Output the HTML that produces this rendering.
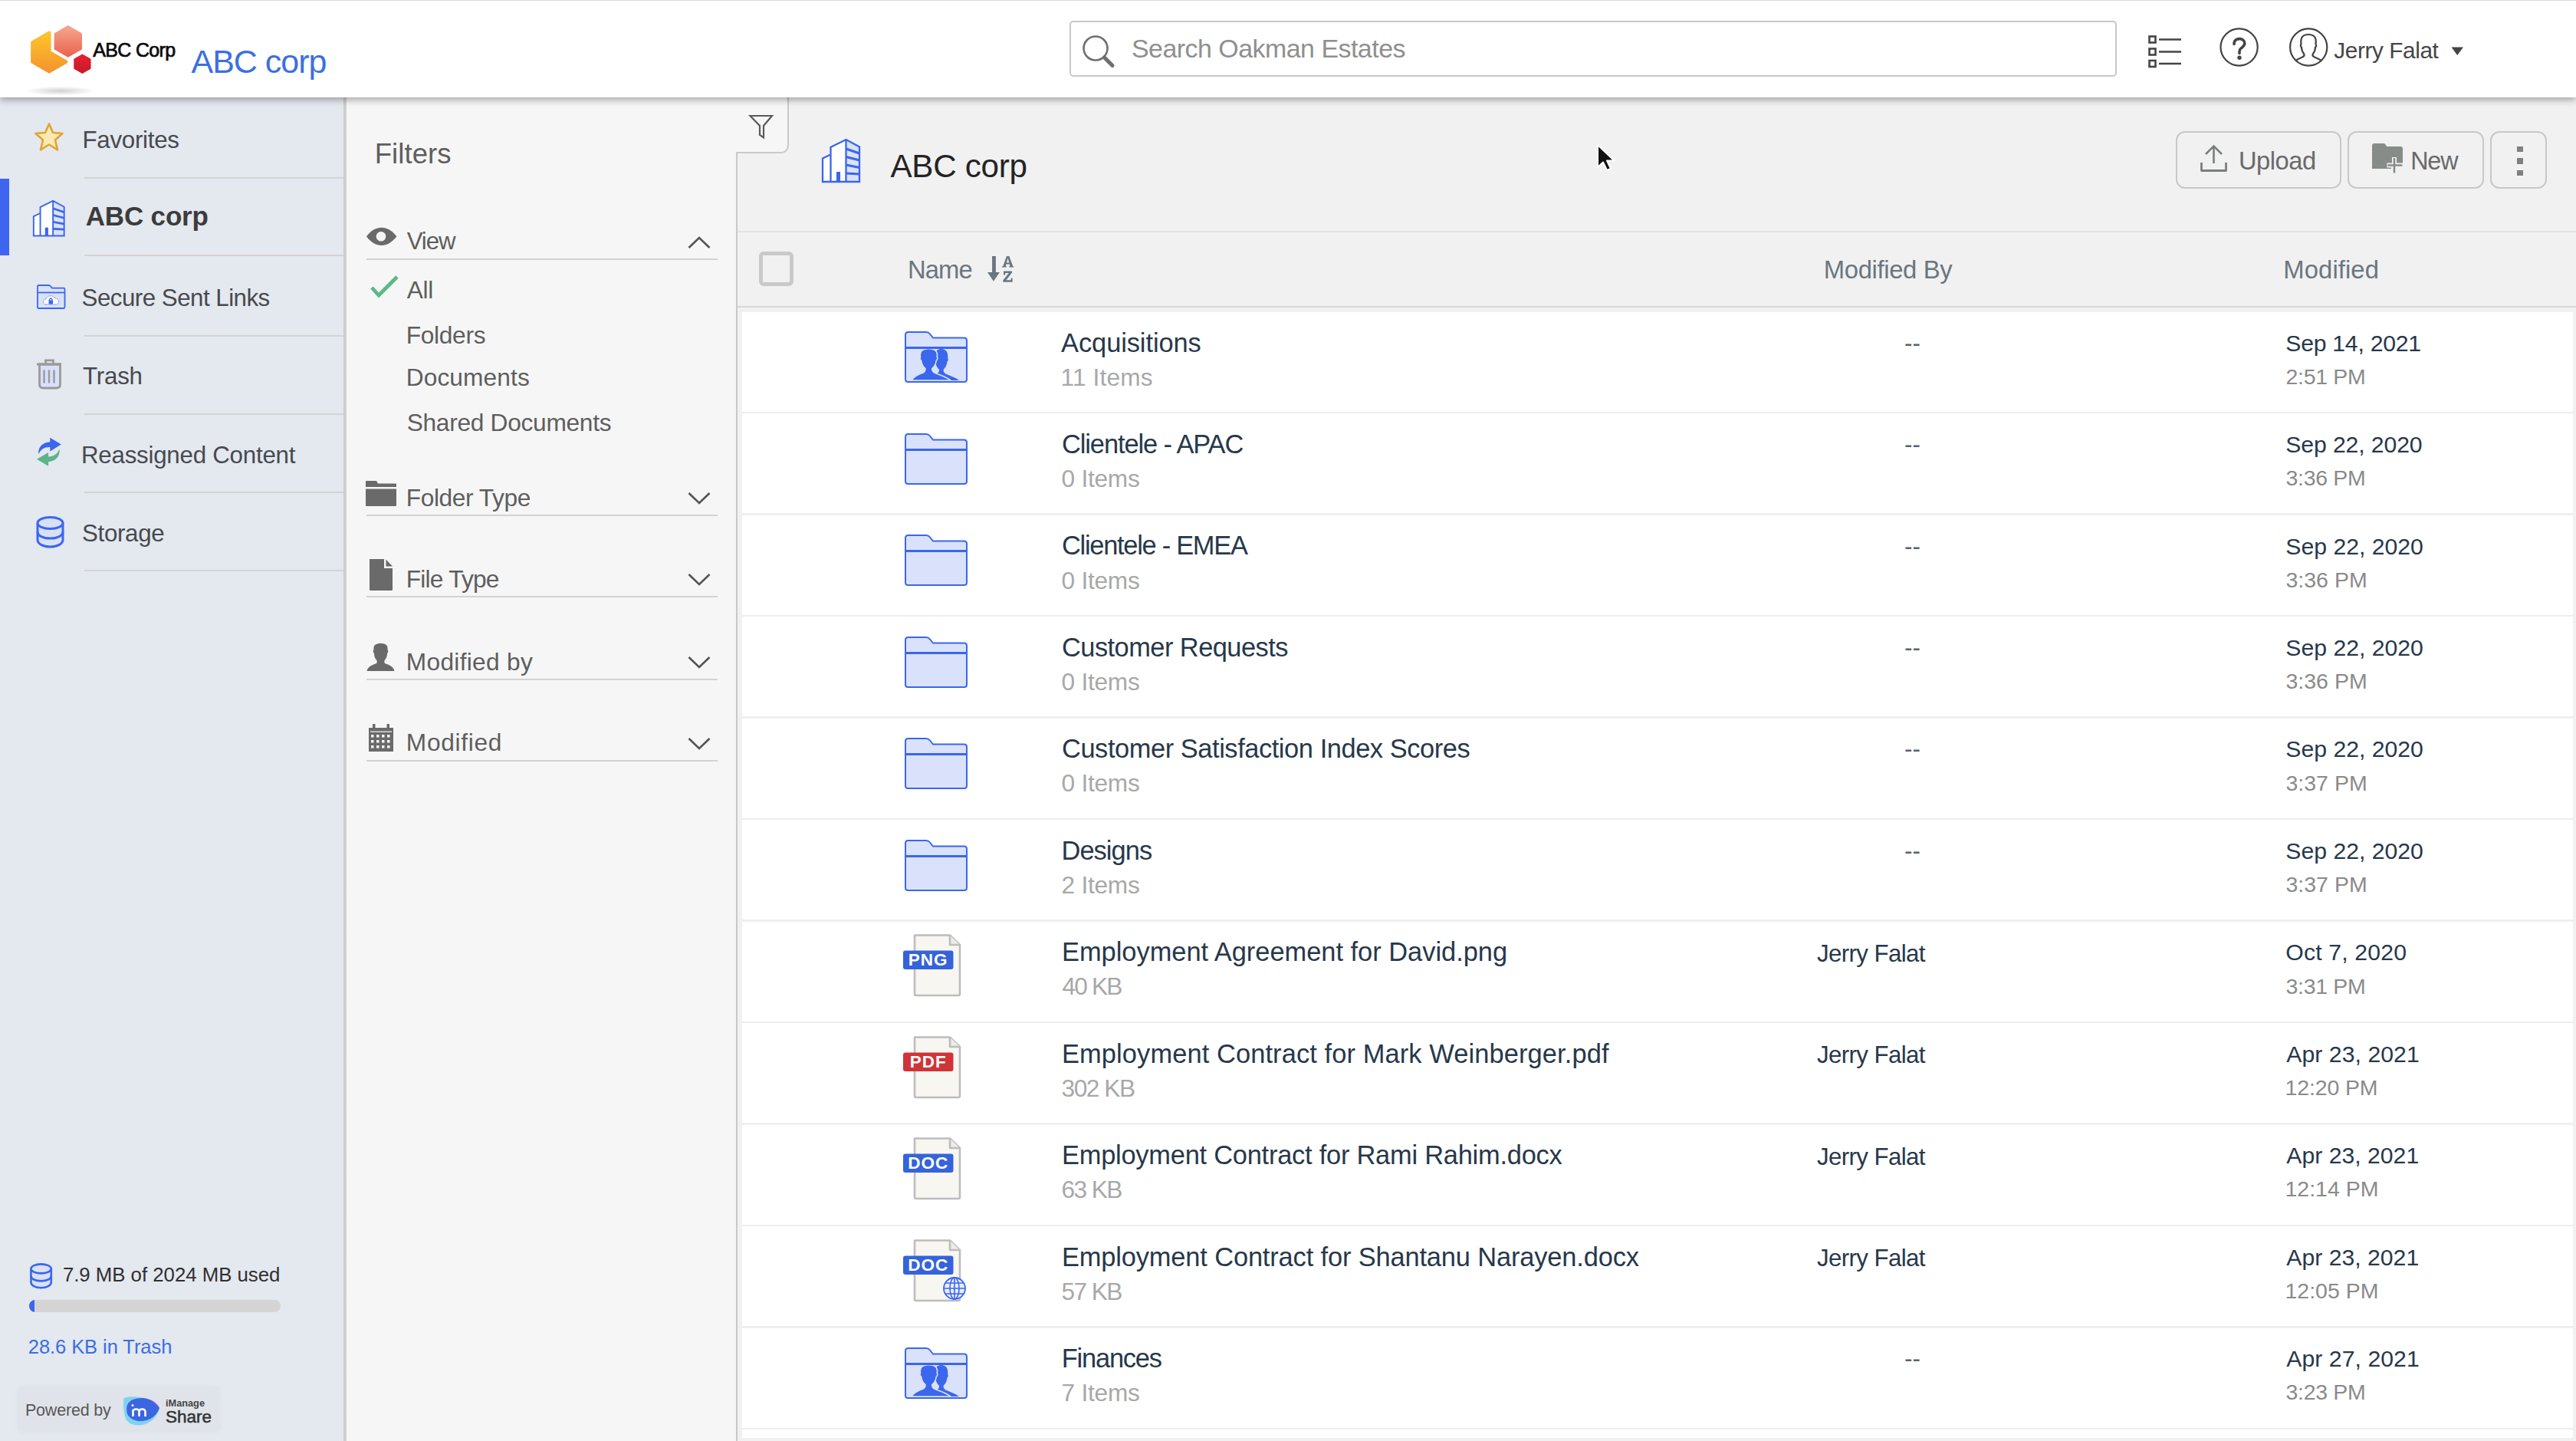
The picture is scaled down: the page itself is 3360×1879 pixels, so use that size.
<!DOCTYPE html>
<html><head><meta charset="utf-8"><style>
html,body{margin:0;padding:0;width:3360px;height:1879px;overflow:hidden;background:#f1f1f1;font-family:'Liberation Sans', sans-serif;}
.a{position:absolute;}
.t{position:absolute;white-space:nowrap;line-height:1;font-family:'Liberation Sans', sans-serif;}
svg{position:absolute;overflow:visible;}
</style></head><body>

<div class="a" style="left:0;top:127px;width:448px;height:1752px;background:#e4e8ef;"></div>
<div class="a" style="left:448px;top:127px;width:4px;height:1752px;background:linear-gradient(to right,#c9c9c9,#d4d4d4);"></div>
<div class="a" style="left:452px;top:127px;width:510px;height:1752px;background:#f6f6f6;"></div>
<div class="a" style="left:960px;top:198px;width:2px;height:1681px;background:#c9c9c9;"></div>
<div class="a" style="left:962px;top:100px;width:65px;height:98px;background:#f6f6f6;border-right:2px solid #c9c9c9;border-bottom:2px solid #c9c9c9;border-bottom-right-radius:10px;"></div>
<div class="a" style="left:962px;top:200px;width:0;height:0;"></div>
<!-- sidebar active marker -->
<div class="a" style="left:0;top:233px;width:12px;height:100px;background:#3d65ef;"></div>
<div class="a" style="left:110px;top:231px;width:338px;height:2px;background:#d5d3d2;"></div><div class="a" style="left:110px;top:332px;width:338px;height:2px;background:#d5d3d2;"></div><div class="a" style="left:110px;top:437px;width:338px;height:2px;background:#d5d3d2;"></div><div class="a" style="left:110px;top:539px;width:338px;height:2px;background:#d5d3d2;"></div><div class="a" style="left:110px;top:641px;width:338px;height:2px;background:#d5d3d2;"></div><div class="a" style="left:110px;top:743px;width:338px;height:2px;background:#d5d3d2;"></div>
<!-- filter lines -->
<div class="a" style="left:478px;top:337px;width:458px;height:2px;background:#d3d3d3;"></div><div class="a" style="left:478px;top:671px;width:458px;height:2px;background:#d3d3d3;"></div><div class="a" style="left:478px;top:777px;width:458px;height:2px;background:#d3d3d3;"></div><div class="a" style="left:478px;top:885px;width:458px;height:2px;background:#d3d3d3;"></div><div class="a" style="left:478px;top:991px;width:458px;height:2px;background:#d3d3d3;"></div>
<!-- table header lines -->
<div class="a" style="left:962px;top:301px;width:2398px;height:2px;background:#e2e2e2;"></div>
<div class="a" style="left:962px;top:399px;width:2398px;height:2px;background:#d8d8d8;"></div>
<div class="a" style="left:990px;top:328px;width:35px;height:35px;border:5px solid #c9c9c9;border-radius:6px;"></div>
<!-- buttons -->
<div class="a" style="left:2838px;top:171px;width:212px;height:71px;border:2px solid #c8c8c8;border-radius:12px;"></div>
<div class="a" style="left:3062px;top:171px;width:174px;height:71px;border:2px solid #c8c8c8;border-radius:12px;"></div>
<div class="a" style="left:3248px;top:171px;width:70px;height:71px;border:2px solid #c8c8c8;border-radius:12px;"></div>
<div class="a" style="left:3283px;top:191px;width:8px;height:7px;background:#808080;"></div>
<div class="a" style="left:3283px;top:206px;width:8px;height:8px;background:#808080;"></div>
<div class="a" style="left:3283px;top:222px;width:8px;height:7px;background:#808080;"></div>
<div class="a" style="left:968px;top:407.00px;width:2388px;height:130px;background:#fff;"></div><div class="a" style="left:968px;top:537.00px;width:2388px;height:2px;background:#eeeeee;"></div><div class="a" style="left:968px;top:539.45px;width:2388px;height:130px;background:#fff;"></div><div class="a" style="left:968px;top:669.45px;width:2388px;height:2px;background:#eeeeee;"></div><div class="a" style="left:968px;top:671.90px;width:2388px;height:130px;background:#fff;"></div><div class="a" style="left:968px;top:801.90px;width:2388px;height:2px;background:#eeeeee;"></div><div class="a" style="left:968px;top:804.35px;width:2388px;height:130px;background:#fff;"></div><div class="a" style="left:968px;top:934.35px;width:2388px;height:2px;background:#eeeeee;"></div><div class="a" style="left:968px;top:936.80px;width:2388px;height:130px;background:#fff;"></div><div class="a" style="left:968px;top:1066.80px;width:2388px;height:2px;background:#eeeeee;"></div><div class="a" style="left:968px;top:1069.25px;width:2388px;height:130px;background:#fff;"></div><div class="a" style="left:968px;top:1199.25px;width:2388px;height:2px;background:#eeeeee;"></div><div class="a" style="left:968px;top:1201.70px;width:2388px;height:130px;background:#fff;"></div><div class="a" style="left:968px;top:1331.70px;width:2388px;height:2px;background:#eeeeee;"></div><div class="a" style="left:968px;top:1334.15px;width:2388px;height:130px;background:#fff;"></div><div class="a" style="left:968px;top:1464.15px;width:2388px;height:2px;background:#eeeeee;"></div><div class="a" style="left:968px;top:1466.60px;width:2388px;height:130px;background:#fff;"></div><div class="a" style="left:968px;top:1596.60px;width:2388px;height:2px;background:#eeeeee;"></div><div class="a" style="left:968px;top:1599.05px;width:2388px;height:130px;background:#fff;"></div><div class="a" style="left:968px;top:1729.05px;width:2388px;height:2px;background:#eeeeee;"></div><div class="a" style="left:968px;top:1731.50px;width:2388px;height:130px;background:#fff;"></div><div class="a" style="left:968px;top:1861.50px;width:2388px;height:2px;background:#eeeeee;"></div><div class="a" style="left:968px;top:1863.95px;width:2388px;height:11.05px;background:#fff;"></div>
<div class="a" style="left:38px;top:1695px;width:328px;height:16px;border-radius:8px;background:#d4d4d4;overflow:hidden;"><div style="width:7px;height:16px;background:#3d65ef;"></div></div>
<div class="a" style="left:24px;top:1808px;width:262px;height:57px;background:#e0e3e9;border-radius:2px;box-shadow:0 2px 8px rgba(0,0,0,0.04);"></div>

<div class="a" style="left:0;top:0;width:3360px;height:127px;background:#fff;box-shadow:0 3px 9px rgba(0,0,0,0.35);z-index:5;"></div>
<div class="a" style="left:0;top:0;width:3360px;height:1px;background:#d5d5d5;z-index:6;"></div>
<div class="a" style="left:1395px;top:27px;width:1362px;height:69px;border:2px solid #c8c8c8;border-radius:5px;z-index:6;"></div>

<div id="hdr_abc" class="t" style="left:249.50px;top:59.20px;font-size:43.0px;color:#3b6fe3;z-index:8;letter-spacing:-0.999px;">ABC corp</div>
<div id="logo_t" class="t" style="left:121.20px;top:52.60px;font-size:25.0px;color:#0a0a0a;z-index:8;-webkit-text-stroke:0.7px #0a0a0a;letter-spacing:-0.648px;">ABC Corp</div>
<div id="search_t" class="t" style="left:1476.00px;top:47.10px;font-size:33.9px;color:#8f8f8f;z-index:8;letter-spacing:-0.494px;">Search Oakman Estates</div>
<div id="jerry_h" class="t" style="left:3044.30px;top:50.80px;font-size:29.8px;color:#454545;z-index:8;letter-spacing:-0.416px;">Jerry Falat</div>
<div id="fav" class="t" style="left:107.40px;top:166.80px;font-size:31.3px;color:#474a4e;letter-spacing:-0.269px;">Favorites</div>
<div id="abc_b" class="t" style="left:111.70px;top:263.90px;font-size:35.0px;color:#3c3c3c;font-weight:700;letter-spacing:-0.160px;">ABC corp</div>
<div id="secure" class="t" style="left:106.60px;top:372.60px;font-size:31.3px;color:#474a4e;letter-spacing:-0.522px;">Secure Sent Links</div>
<div id="trash" class="t" style="left:108.00px;top:474.90px;font-size:31.3px;color:#474a4e;letter-spacing:-0.208px;">Trash</div>
<div id="reass" class="t" style="left:106.00px;top:577.70px;font-size:31.3px;color:#474a4e;letter-spacing:-0.247px;">Reassigned Content</div>
<div id="storage" class="t" style="left:107.00px;top:679.70px;font-size:31.3px;color:#474a4e;letter-spacing:-0.335px;">Storage</div>
<div id="used" class="t" style="left:81.90px;top:1650.20px;font-size:25.8px;color:#303030;letter-spacing:-0.023px;">7.9 MB of 2024 MB used</div>
<div id="intrash" class="t" style="left:36.80px;top:1744.00px;font-size:25.5px;color:#3a6ee6;letter-spacing:-0.067px;">28.6 KB in Trash</div>
<div id="powered" class="t" style="left:32.90px;top:1829.30px;font-size:21.5px;color:#585858;letter-spacing:-0.187px;">Powered by</div>
<div id="filters" class="t" style="left:488.70px;top:183.30px;font-size:36.5px;color:#5e5e5e;letter-spacing:0.082px;">Filters</div>
<div id="f_view" class="t" style="left:530.70px;top:299.00px;font-size:31.2px;color:#5e5e5e;letter-spacing:-1.071px;">View</div>
<div id="f_all" class="t" style="left:530.70px;top:363.30px;font-size:31.7px;color:#5e5e5e;letter-spacing:-0.288px;">All</div>
<div id="f_folders" class="t" style="left:529.70px;top:421.70px;font-size:31.7px;color:#5e5e5e;letter-spacing:-0.303px;">Folders</div>
<div id="f_docs" class="t" style="left:529.70px;top:477.30px;font-size:31.7px;color:#5e5e5e;letter-spacing:0.110px;">Documents</div>
<div id="f_shared" class="t" style="left:530.70px;top:535.70px;font-size:31.7px;color:#5e5e5e;letter-spacing:-0.294px;">Shared Documents</div>
<div id="f_ftype" class="t" style="left:529.80px;top:633.70px;font-size:31.7px;color:#5e5e5e;letter-spacing:-0.429px;">Folder Type</div>
<div id="f_filetype" class="t" style="left:529.80px;top:739.60px;font-size:31.7px;color:#5e5e5e;letter-spacing:-0.792px;">File Type</div>
<div id="f_modby" class="t" style="left:529.80px;top:847.50px;font-size:31.7px;color:#5e5e5e;letter-spacing:0.300px;">Modified by</div>
<div id="f_mod" class="t" style="left:529.80px;top:953.00px;font-size:31.7px;color:#5e5e5e;letter-spacing:0.693px;">Modified</div>
<div id="title" class="t" style="left:1161.50px;top:195.60px;font-size:42.2px;color:#242424;letter-spacing:-0.296px;">ABC corp</div>
<div id="upload" class="t" style="left:2920.00px;top:194.00px;font-size:32.7px;color:#6a6a6a;letter-spacing:-0.481px;">Upload</div>
<div id="new" class="t" style="left:3144.20px;top:194.00px;font-size:32.3px;color:#6a6a6a;letter-spacing:-1.143px;">New</div>
<div id="h_name" class="t" style="left:1184.00px;top:336.40px;font-size:32.8px;color:#6b7680;letter-spacing:-0.915px;">Name</div>
<div id="h_modby" class="t" style="left:2378.80px;top:336.40px;font-size:32.8px;color:#6b7680;letter-spacing:-0.345px;">Modified By</div>
<div id="h_mod" class="t" style="left:2978.30px;top:336.40px;font-size:32.8px;color:#6b7680;letter-spacing:0.096px;">Modified</div>
<div id="r0_name" class="t" style="left:1384.10px;top:429.50px;font-size:34.4px;color:#27384a;letter-spacing:-0.074px;">Acquisitions</div>
<div id="r0_sub" class="t" style="left:1383.50px;top:476.60px;font-size:31.6px;color:#a8a8a8;letter-spacing:0.183px;">11 Items</div>
<div id="r0_by" class="t" style="left:2484.00px;top:431.60px;font-size:31.2px;color:#56616b;">--</div>
<div id="r0_date" class="t" style="left:2981.30px;top:432.60px;font-size:30.2px;color:#27384a;letter-spacing:-0.265px;">Sep 14, 2021</div>
<div id="r0_time" class="t" style="left:2981.50px;top:476.80px;font-size:28.5px;color:#8a8a8a;letter-spacing:-0.316px;">2:51 PM</div>
<div id="r1_name" class="t" style="left:1385.00px;top:561.95px;font-size:34.4px;color:#27384a;letter-spacing:-1.089px;">Clientele - APAC</div>
<div id="r1_sub" class="t" style="left:1384.50px;top:609.05px;font-size:31.6px;color:#a8a8a8;letter-spacing:-0.232px;">0 Items</div>
<div id="r1_by" class="t" style="left:2484.00px;top:564.05px;font-size:31.2px;color:#56616b;">--</div>
<div id="r1_date" class="t" style="left:2981.30px;top:565.05px;font-size:30.2px;color:#27384a;letter-spacing:-0.120px;">Sep 22, 2020</div>
<div id="r1_time" class="t" style="left:2981.50px;top:609.25px;font-size:28.5px;color:#8a8a8a;letter-spacing:-0.316px;">3:36 PM</div>
<div id="r2_name" class="t" style="left:1385.00px;top:694.40px;font-size:34.4px;color:#27384a;letter-spacing:-1.267px;">Clientele - EMEA</div>
<div id="r2_sub" class="t" style="left:1384.50px;top:741.50px;font-size:31.6px;color:#a8a8a8;letter-spacing:-0.232px;">0 Items</div>
<div id="r2_by" class="t" style="left:2484.00px;top:696.50px;font-size:31.2px;color:#56616b;">--</div>
<div id="r2_date" class="t" style="left:2981.30px;top:697.50px;font-size:30.2px;color:#27384a;">Sep 22, 2020</div>
<div id="r2_time" class="t" style="left:2981.50px;top:741.70px;font-size:28.5px;color:#8a8a8a;">3:36 PM</div>
<div id="r3_name" class="t" style="left:1385.00px;top:826.85px;font-size:34.4px;color:#27384a;letter-spacing:-0.532px;">Customer Requests</div>
<div id="r3_sub" class="t" style="left:1384.50px;top:873.95px;font-size:31.6px;color:#a8a8a8;letter-spacing:-0.232px;">0 Items</div>
<div id="r3_by" class="t" style="left:2484.00px;top:828.95px;font-size:31.2px;color:#56616b;">--</div>
<div id="r3_date" class="t" style="left:2981.30px;top:829.95px;font-size:30.2px;color:#27384a;">Sep 22, 2020</div>
<div id="r3_time" class="t" style="left:2981.50px;top:874.15px;font-size:28.5px;color:#8a8a8a;">3:36 PM</div>
<div id="r4_name" class="t" style="left:1385.00px;top:959.30px;font-size:34.4px;color:#27384a;letter-spacing:-0.424px;">Customer Satisfaction Index Scores</div>
<div id="r4_sub" class="t" style="left:1384.50px;top:1006.40px;font-size:31.6px;color:#a8a8a8;letter-spacing:-0.232px;">0 Items</div>
<div id="r4_by" class="t" style="left:2484.00px;top:961.40px;font-size:31.2px;color:#56616b;">--</div>
<div id="r4_date" class="t" style="left:2981.30px;top:962.40px;font-size:30.2px;color:#27384a;">Sep 22, 2020</div>
<div id="r4_time" class="t" style="left:2981.50px;top:1006.60px;font-size:28.5px;color:#8a8a8a;">3:37 PM</div>
<div id="r5_name" class="t" style="left:1384.50px;top:1091.75px;font-size:34.4px;color:#27384a;letter-spacing:-0.942px;">Designs</div>
<div id="r5_sub" class="t" style="left:1384.50px;top:1138.85px;font-size:31.6px;color:#a8a8a8;letter-spacing:-0.232px;">2 Items</div>
<div id="r5_by" class="t" style="left:2484.00px;top:1093.85px;font-size:31.2px;color:#56616b;">--</div>
<div id="r5_date" class="t" style="left:2981.30px;top:1094.85px;font-size:30.2px;color:#27384a;">Sep 22, 2020</div>
<div id="r5_time" class="t" style="left:2981.50px;top:1139.05px;font-size:28.5px;color:#8a8a8a;">3:37 PM</div>
<div id="r6_name" class="t" style="left:1385.00px;top:1224.20px;font-size:34.4px;color:#27384a;letter-spacing:0.000px;">Employment Agreement for David.png</div>
<div id="r6_sub" class="t" style="left:1385.50px;top:1271.30px;font-size:31.6px;color:#a8a8a8;letter-spacing:-1.798px;">40 KB</div>
<div id="r6_by" class="t" style="left:2370.00px;top:1227.70px;font-size:31.2px;color:#27384a;letter-spacing:-0.584px;">Jerry Falat</div>
<div id="r6_date" class="t" style="left:2981.30px;top:1227.30px;font-size:30.2px;color:#27384a;letter-spacing:0.162px;">Oct 7, 2020</div>
<div id="r6_time" class="t" style="left:2981.50px;top:1271.50px;font-size:28.5px;color:#8a8a8a;letter-spacing:-0.316px;">3:31 PM</div>
<div id="r7_name" class="t" style="left:1385.00px;top:1356.65px;font-size:34.4px;color:#27384a;letter-spacing:0.118px;">Employment Contract for Mark Weinberger.pdf</div>
<div id="r7_sub" class="t" style="left:1384.50px;top:1403.75px;font-size:31.6px;color:#a8a8a8;letter-spacing:-1.413px;">302 KB</div>
<div id="r7_by" class="t" style="left:2370.00px;top:1360.15px;font-size:31.2px;color:#27384a;letter-spacing:-0.584px;">Jerry Falat</div>
<div id="r7_date" class="t" style="left:2982.30px;top:1359.75px;font-size:30.2px;color:#27384a;letter-spacing:0.047px;">Apr 23, 2021</div>
<div id="r7_time" class="t" style="left:2980.50px;top:1403.95px;font-size:28.5px;color:#8a8a8a;letter-spacing:-0.135px;">12:20 PM</div>
<div id="r8_name" class="t" style="left:1385.00px;top:1489.10px;font-size:34.4px;color:#27384a;letter-spacing:-0.226px;">Employment Contract for Rami Rahim.docx</div>
<div id="r8_sub" class="t" style="left:1384.50px;top:1536.20px;font-size:31.6px;color:#a8a8a8;letter-spacing:-1.548px;">63 KB</div>
<div id="r8_by" class="t" style="left:2370.00px;top:1492.60px;font-size:31.2px;color:#27384a;letter-spacing:-0.584px;">Jerry Falat</div>
<div id="r8_date" class="t" style="left:2982.30px;top:1492.20px;font-size:30.2px;color:#27384a;">Apr 23, 2021</div>
<div id="r8_time" class="t" style="left:2980.50px;top:1536.40px;font-size:28.5px;color:#8a8a8a;">12:14 PM</div>
<div id="r9_name" class="t" style="left:1385.00px;top:1621.55px;font-size:34.4px;color:#27384a;letter-spacing:-0.136px;">Employment Contract for Shantanu Narayen.docx</div>
<div id="r9_sub" class="t" style="left:1384.50px;top:1668.65px;font-size:31.6px;color:#a8a8a8;letter-spacing:-1.548px;">57 KB</div>
<div id="r9_by" class="t" style="left:2370.00px;top:1625.05px;font-size:31.2px;color:#27384a;letter-spacing:-0.584px;">Jerry Falat</div>
<div id="r9_date" class="t" style="left:2982.30px;top:1624.65px;font-size:30.2px;color:#27384a;">Apr 23, 2021</div>
<div id="r9_time" class="t" style="left:2980.50px;top:1668.85px;font-size:28.5px;color:#8a8a8a;">12:05 PM</div>
<div id="r10_name" class="t" style="left:1384.70px;top:1754.00px;font-size:34.4px;color:#27384a;letter-spacing:-1.178px;">Finances</div>
<div id="r10_sub" class="t" style="left:1384.50px;top:1801.10px;font-size:31.6px;color:#a8a8a8;letter-spacing:-0.199px;">7 Items</div>
<div id="r10_by" class="t" style="left:2484.00px;top:1756.10px;font-size:31.2px;color:#56616b;">--</div>
<div id="r10_date" class="t" style="left:2982.30px;top:1757.10px;font-size:30.2px;color:#27384a;letter-spacing:0.047px;">Apr 27, 2021</div>
<div id="r10_time" class="t" style="left:2981.50px;top:1801.30px;font-size:28.5px;color:#8a8a8a;letter-spacing:-0.316px;">3:23 PM</div>
<svg style="left:30px;top:25px;z-index:7" width="100" height="105" viewBox="0 0 100 105">
<defs>
<linearGradient id="go" x1="0" y1="0" x2="0" y2="1"><stop offset="0" stop-color="#fdc52c"/><stop offset="1" stop-color="#f5942e"/></linearGradient>
<linearGradient id="gp" x1="0" y1="0" x2="0" y2="1"><stop offset="0" stop-color="#f4a68c"/><stop offset="1" stop-color="#ec634f"/></linearGradient>
<linearGradient id="gr" x1="0" y1="0" x2="0" y2="1"><stop offset="0" stop-color="#ea1f2e"/><stop offset="1" stop-color="#c51a2b"/></linearGradient>
<radialGradient id="gs"><stop offset="0" stop-color="#000" stop-opacity="0.18"/><stop offset="1" stop-color="#000" stop-opacity="0"/></radialGradient>
</defs>
<ellipse cx="49" cy="93.5" rx="46" ry="6" fill="url(#gs)"/>
<polygon points="34.20,17.50 56.28,30.25 56.28,55.75 34.20,68.50 12.12,55.75 12.12,30.25" fill="url(#go)" stroke="url(#go)" stroke-width="4" stroke-linejoin="round"/>
<polygon points="58.80,4.40 80.02,16.65 80.02,41.15 58.80,53.40 37.58,41.15 37.58,16.65" fill="#fff" stroke="#fff" stroke-width="2" stroke-linejoin="round"/>
<polygon points="58.80,9.10 75.95,19.00 75.95,38.80 58.80,48.70 41.65,38.80 41.65,19.00" fill="url(#gp)" stroke="url(#gp)" stroke-width="2" stroke-linejoin="round"/>
<polygon points="77.40,42.20 91.26,50.20 91.26,66.20 77.40,74.20 63.54,66.20 63.54,50.20" fill="#fff" stroke="#fff" stroke-width="2" stroke-linejoin="round"/>
<polygon points="77.40,46.50 87.53,52.35 87.53,64.05 77.40,69.90 67.27,64.05 67.27,52.35" fill="url(#gr)" stroke="url(#gr)" stroke-width="2" stroke-linejoin="round"/>
</svg><svg style="left:1410px;top:44px;z-index:7" width="48" height="46" viewBox="0 0 48 46">
<circle cx="19" cy="19" r="15.5" fill="none" stroke="#6f6f6f" stroke-width="2.6"/>
<path d="M30.5,31 L41,41.5" stroke="#6f6f6f" stroke-width="5" stroke-linecap="round"/>
</svg><svg style="left:2800px;top:44px;z-index:7" width="48" height="46" viewBox="0 0 48 46">
<rect x="3.5" y="3.5" width="8" height="8" fill="none" stroke="#444" stroke-width="2.6"/>
<rect x="3.5" y="19.5" width="8" height="8" fill="none" stroke="#444" stroke-width="2.6"/>
<rect x="3.5" y="35" width="8" height="8" fill="none" stroke="#444" stroke-width="2.6"/>
<path d="M16,7.5 H45 M16,23.5 H45 M16,39 H45" stroke="#444" stroke-width="2.4"/>
</svg><svg style="left:2893px;top:34px;z-index:7" width="56" height="56" viewBox="0 0 56 56">
<circle cx="27.6" cy="27.5" r="24.1" fill="none" stroke="#444" stroke-width="2.2"/>
<path d="M21,23.5 C21,18.5 24.5,16.6 28,16.6 C31.5,16.6 34.8,18.5 34.8,22.5 C34.8,26 31.5,27.5 29.5,29.5 C28.5,30.5 28,31.5 28,33 V35.5" fill="none" stroke="#444" stroke-width="3.6" stroke-linecap="round"/>
<circle cx="28" cy="41.3" r="2.7" fill="#444"/>
</svg><svg style="left:2983px;top:34px;z-index:7" width="56" height="56" viewBox="0 0 56 56">
<defs><clipPath id="uc"><circle cx="28.2" cy="27.5" r="24"/></clipPath></defs>
<circle cx="28.2" cy="27.5" r="24.1" fill="none" stroke="#444" stroke-width="2.2"/>
<path clip-path="url(#uc)" d="M7,48 C12,44 16,42 21,40 C22.5,39 23,37.5 22,36 C20,33.5 19,30 19,27.5 C17.5,27 17.5,24.5 18.5,23.5 C17.5,16 19.5,11 28,11 C36.5,11 38.5,16 37.5,23.5 C38.5,24.5 38.5,27 37,27.5 C37,30 36,33.5 34,36 C33,37.5 33.5,39 35,40 C40,42 44,44 49,48" fill="none" stroke="#444" stroke-width="2.2"/>
</svg><svg style="left:3197px;top:61px;z-index:7" width="17" height="12" viewBox="0 0 17 12"><polygon points="0.5,0.5 16,0.5 8.2,11" fill="#444"/></svg><svg style="left:42px;top:158px;" width="44" height="42" viewBox="0 0 44 42">
<polygon points="22,3.5 27,15 39.5,16 30,24.5 33,37.5 22,30.5 11,37.5 14,24.5 4.5,16 17,15" fill="#f9eab4" stroke="#e1a52c" stroke-width="2.6" stroke-linejoin="round"/>
</svg><svg style="left:42.5px;top:260.5px;" width="41.5" height="47.309999999999995" viewBox="0 0 50 57">
<path d="M19,56 V43 H24 V56" fill="#3b66ee"/>
<polygon points="31.5,1 49,10.5 49,56 31.5,56" fill="#d9e2fa"/>
<polygon points="1,25.5 11.5,20.5 11.5,11 31.5,1 31.5,56 1,56" fill="#fff"/>
<rect x="19" y="43" width="5" height="13" fill="#3b66ee"/>
<path d="M1,56 V25.5 L11.5,20.5 V11 L31.5,1 L49,10.5 V56 Z M11.5,20.5 V56 M31.5,1 V56" fill="none" stroke="#3b66ee" stroke-width="2.3" stroke-linejoin="miter"/>
<path d="M31.5,13 L49,19 M31.5,23.5 L49,28 M31.5,34 L49,37.5 M31.5,45 L49,46" stroke="#3b66ee" stroke-width="3.2" fill="none"/>
</svg><svg style="left:47px;top:370px;" width="40" height="34" viewBox="0 0 40 34">
<path d="M2,3.5 Q2,2 3.5,2 H16.5 Q18,2 19,3.3 L21,5.6 H36 Q37.5,5.6 37.5,7.1 V30.5 Q37.5,32 36,32 H3.5 Q2,32 2,30.5 Z" fill="#d9e2fa" stroke="#3b66ee" stroke-width="1.8"/>
<rect x="1.5" y="10.6" width="36.5" height="1.8" fill="#3b66ee"/>
<path d="M13,27 Q9.5,27 9.5,23.5 Q9.5,20 13,20 Q14,16 18,16 Q22,15 24,18.5 Q25,19 26.5,19.5 Q29.5,20.5 29.5,23.5 Q29.5,27 26,27 Z" fill="#fff" stroke="#3b66ee" stroke-width="0.9" stroke-dasharray="1.2 0.8"/>
<rect x="16.5" y="21.5" width="5.5" height="5" fill="#3b66ee"/>
<path d="M17.5,22 V20.5 Q19.2,17.5 21,20.5 V22" fill="none" stroke="#3b66ee" stroke-width="1.4"/>
</svg><svg style="left:47px;top:466px;" width="36" height="44" viewBox="0 0 36 44">
<path d="M4.5,9 V35 Q4.5,40 9.5,40 H26.5 Q31.5,40 31.5,35 V9 Z" fill="#d9e1f9" stroke="#9a9a9a" stroke-width="2.8" stroke-linejoin="round"/>
<path d="M1,9 H33 M12.5,9 V3.8 H22.5 V9" fill="none" stroke="#9a9a9a" stroke-width="2.8"/>
<path d="M10.5,16.5 V33.5 M17,16.5 V33.5 M23.5,16.5 V33.5" stroke="#9a9a9a" stroke-width="2.4"/>
</svg><svg style="left:46px;top:568px;" width="36" height="42" viewBox="0 0 36 42">
<path d="M4.2,24.3 C3.5,15 9,9 19.3,8.2 V2.8 L33.8,11.4 L19.3,20.5 V15 C12,14.8 7,18 4.2,24.3 Z" fill="#3b66ee"/>
<path d="M31.6,17.3 C32.5,27 27,33.5 17.1,34.2 V39.8 L2,30.7 L17.1,22 V27.5 C24,27.5 29,24 31.6,17.3 Z" fill="#5cb489"/>
</svg><svg style="left:46px;top:672px;" width="40" height="44" viewBox="0 0 40 44">
<path d="M3,10 V32 C3,37 10,41 19.5,41 C29,41 36,37 36,32 V10" fill="#d9e1f9" stroke="#3b66ee" stroke-width="3"/>
<ellipse cx="19.5" cy="10" rx="16.5" ry="7.5" fill="#d9e1f9" stroke="#3b66ee" stroke-width="3"/>
<path d="M3,21.5 C3,26.5 10,30 19.5,30 C29,30 36,26.5 36,21.5" fill="none" stroke="#3b66ee" stroke-width="3"/>
</svg><svg style="left:38px;top:1646px;" width="32" height="36" viewBox="0 0 40 44">
<path d="M3,10 V32 C3,37 10,41 19.5,41 C29,41 36,37 36,32 V10" fill="#d9e1f9" stroke="#3b66ee" stroke-width="3.2"/>
<ellipse cx="19.5" cy="10" rx="16.5" ry="7.5" fill="#d9e1f9" stroke="#3b66ee" stroke-width="3.2"/>
<path d="M3,21.5 C3,26.5 10,30 19.5,30 C29,30 36,26.5 36,21.5" fill="none" stroke="#3b66ee" stroke-width="3.2"/>
</svg><svg style="left:158px;top:1818px;" width="125" height="46" viewBox="0 0 125 46">
<path d="M3.5,5 C10,2.5 22,3 32,5.5 C41,8 48,13 50,18 C48,26 42,36 30,39.5 C20,42 10,40 6,32 C3,24 2.5,12 3.5,5 Z" fill="#7fd3f2"/>
<path d="M8,14 C11,7 20,4.5 29,5 C38,6 46,11 50,18 C47,27 39,34 28,35 C18,36 9,31 7.5,24 C7,20 7,17 8,14 Z" fill="#3c66e0"/>
<path d="M36,6.5 C42,8.5 47,12.5 50,18 C46,15 41,11 36,6.5 Z" fill="#6a5fd6"/>
<circle cx="15" cy="14.5" r="1.5" fill="#fff"/>
<path d="M15.5,29 V20 M15.5,23 Q15.5,19.5 19.5,19.5 Q23.5,19.5 23.5,23 V29 M23.5,23 Q23.5,19.5 27.5,19.5 Q31.5,19.5 31.5,23 V29" fill="none" stroke="#fff" stroke-width="2.6"/>
<text x="58" y="15.5" font-family="Liberation Sans" font-weight="700" font-size="12" fill="#444" textLength="51" lengthAdjust="spacingAndGlyphs">iManage</text>
<text x="58" y="37" font-family="Liberation Sans" font-size="22" fill="#2f3335" stroke="#2f3335" stroke-width="0.5" textLength="60" lengthAdjust="spacingAndGlyphs">Share</text>
</svg><svg style="left:975px;top:148px;" width="36" height="34" viewBox="0 0 36 34">
<path d="M3.5,3 H32 L21,16 V31.5 L16,28 V16 Z" fill="none" stroke="#5a5a5a" stroke-width="2.2" stroke-linejoin="miter"/>
</svg><svg style="left:476px;top:294px;" width="44" height="30" viewBox="0 0 44 30">
<path d="M2,14.3 C8,6 15,2.7 21.5,2.7 C28,2.7 35,6 41.5,14.3 C35,22.6 28,26 21.5,26 C15,26 8,22.6 2,14.3 Z" fill="#6a6a6a"/>
<circle cx="21" cy="14.3" r="6.3" fill="#f6f6f6"/>
</svg><svg style="left:896px;top:306px;" width="32" height="20" viewBox="0 0 32 20"><path d="M2.5,17 L16,4 L29.5,17" fill="none" stroke="#555" stroke-width="2.7"/></svg><svg style="left:481px;top:357px;" width="42" height="34" viewBox="0 0 42 34"><path d="M4,18 L13,28 L37,4" fill="none" stroke="#5cb88b" stroke-width="4.8"/></svg><svg style="left:896px;top:640px;" width="32" height="20" viewBox="0 0 32 20"><path d="M2.5,3 L16,16 L29.5,3" fill="none" stroke="#555" stroke-width="2.7"/></svg><svg style="left:896px;top:746px;" width="32" height="20" viewBox="0 0 32 20"><path d="M2.5,3 L16,16 L29.5,3" fill="none" stroke="#555" stroke-width="2.7"/></svg><svg style="left:896px;top:854px;" width="32" height="20" viewBox="0 0 32 20"><path d="M2.5,3 L16,16 L29.5,3" fill="none" stroke="#555" stroke-width="2.7"/></svg><svg style="left:896px;top:960px;" width="32" height="20" viewBox="0 0 32 20"><path d="M2.5,3 L16,16 L29.5,3" fill="none" stroke="#555" stroke-width="2.7"/></svg><svg style="left:476px;top:626px;" width="42" height="36" viewBox="0 0 42 36">
<path d="M1,2 Q1,1 2,1 H15 L17,4.5 H40 Q41,4.5 41,5.5 V9 H1 Z M1,11.5 H41 V33 Q41,34 40,34 H2 Q1,34 1,33 Z" fill="#6a6a6a"/>
</svg><svg style="left:481px;top:728px;" width="34" height="43" viewBox="0 0 34 43">
<path d="M1,1 H20 V13 H31 V41 Q31,42 30,42 H2 Q1,42 1,41 Z M22.5,1.5 L31,10.5 H22.5 Z" fill="#6a6a6a"/>
</svg><svg style="left:477px;top:838px;" width="40" height="38" viewBox="0 0 40 38">
<path d="M1.5,37 C2.5,31 9,29 14,27 C15,25.5 15,23.5 14,22.5 C12,20.5 11,17.5 11,14 C9.5,13 9.5,10 10.5,9 C10,4 12,1 19.5,1 C27,1 29,4 28.5,9 C29.5,10 29.5,13 28,14 C28,17.5 27,20.5 25,22.5 C24,23.5 24,25.5 25,27 C30,29 36.5,31 37.5,37 Z" fill="#6a6a6a"/>
</svg><svg style="left:480px;top:943px;" width="36" height="40" viewBox="0 0 36 40">
<path d="M1,6 H33 V37 H1 Z" fill="#6a6a6a"/>
<rect x="6" y="1" width="3.5" height="8" fill="#6a6a6a"/><rect x="24.5" y="1" width="3.5" height="8" fill="#6a6a6a"/>
<rect x="3" y="10.5" width="28" height="1.2" fill="#f6f6f6"/>
<rect x="4" y="15" width="3.5" height="3.5" fill="#f6f6f6"/><rect x="11" y="15" width="3.5" height="3.5" fill="#f6f6f6"/><rect x="18" y="15" width="3.5" height="3.5" fill="#f6f6f6"/><rect x="25" y="15" width="3.5" height="3.5" fill="#f6f6f6"/><rect x="4" y="22" width="3.5" height="3.5" fill="#f6f6f6"/><rect x="11" y="22" width="3.5" height="3.5" fill="#f6f6f6"/><rect x="18" y="22" width="3.5" height="3.5" fill="#f6f6f6"/><rect x="25" y="22" width="3.5" height="3.5" fill="#f6f6f6"/><rect x="4" y="29" width="3.5" height="3.5" fill="#f6f6f6"/><rect x="11" y="29" width="3.5" height="3.5" fill="#f6f6f6"/><rect x="18" y="29" width="3.5" height="3.5" fill="#f6f6f6"/><rect x="25" y="29" width="3.5" height="3.5" fill="#f6f6f6"/>
</svg><svg style="left:1071.5px;top:181px;" width="50.0" height="57.0" viewBox="0 0 50 57">
<path d="M19,56 V43 H24 V56" fill="#3b66ee"/>
<polygon points="31.5,1 49,10.5 49,56 31.5,56" fill="#d9e2fa"/>
<polygon points="1,25.5 11.5,20.5 11.5,11 31.5,1 31.5,56 1,56" fill="#fff"/>
<rect x="19" y="43" width="5" height="13" fill="#3b66ee"/>
<path d="M1,56 V25.5 L11.5,20.5 V11 L31.5,1 L49,10.5 V56 Z M11.5,20.5 V56 M31.5,1 V56" fill="none" stroke="#3b66ee" stroke-width="2.3" stroke-linejoin="miter"/>
<path d="M31.5,13 L49,19 M31.5,23.5 L49,28 M31.5,34 L49,37.5 M31.5,45 L49,46" stroke="#3b66ee" stroke-width="3.2" fill="none"/>
</svg><svg style="left:2868px;top:187px;" width="40" height="40" viewBox="0 0 40 40">
<path d="M19.5,26 V4 M9,14 L19.5,3.5 L30,14" fill="none" stroke="#7a7f7c" stroke-width="2.6"/>
<path d="M3.5,25 V35.5 H35.5 V25" fill="none" stroke="#7a7f7c" stroke-width="2.8" stroke-linejoin="round"/>
</svg><svg style="left:3093px;top:186px;" width="44" height="42" viewBox="0 0 44 42">
<path d="M1,4 Q1,1 4,1 H16 Q18,1 19,3 L20,5 H38 Q41,5 41,8 V31 H26 V34 H1 Z" fill="#878c89"/>
<path d="M30,19 V40 M20.5,29.5 H41" stroke="#f2f2f2" stroke-width="6"/>
<path d="M30,20 V39.5 M21.5,29.5 H40.5" stroke="#878c89" stroke-width="2.6"/>
</svg><svg style="left:1286px;top:331px;" width="40" height="40" viewBox="0 0 40 40">
<rect x="8.05" y="3" width="4.85" height="22" fill="#6b7680"/><polygon points="2,24 17.9,24 9.95,35.8" fill="#6b7680"/>
<path fill-rule="evenodd" d="M20.9,17.6 V16.2 H22.2 L27,3 H30.4 L35.2,16.2 H36.2 V17.6 H30.2 V16.2 H31.4 L30.7,13.6 H26.5 L25.8,16.2 H27 V17.6 Z M27,11.4 H30.2 L28.6,5.6 Z" fill="#6b7680"/>
<path d="M23,22.5 H34 V24.6 L26.5,34.2 H32.5 V31.8 H34.6 V36.7 H22.3 V34.6 L29.8,25 H25.2 V27.6 H23 Z" fill="#6b7680"/>
</svg><svg style="left:1180px;top:432px;" width="82" height="67" viewBox="0 0 82 67">
<path d="M1,4.5 Q1,1 4.5,1 H28 Q31,1 33,3.5 L37,8.5 H77.5 Q81,8.5 81,12 V62.5 Q81,66 77.5,66 H4.5 Q1,66 1,62.5 Z" fill="#d9e2fa" stroke="#3b66ee" stroke-width="2"/>
<path d="M30,64 C34,60 38,57.5 42,55.5 C44,54.5 45,52.5 45,50 C42,47.5 40.5,43.5 40,39.5 C38.8,39 38.3,36.5 39.3,35 C38.5,28.5 41,23 47.75,23 C54.5,23 57,28.5 56.2,35 C57.2,36.5 56.7,39 55.5,39.5 C55,43.5 53.5,47.5 50.5,50 C50.5,52.5 51.5,54.5 53.5,55.5 C59,58 66,60 71,64 Z" fill="#3b66ee"/>
<path d="M9,64 C12,59 18,56 24,54 C26,53 27,51 27,48.5 C24,46 22,42 21.5,38 C20,37.5 19.5,35 20.5,33.5 C19.5,27 22,22.6 31.4,22.6 C40.8,22.6 43.3,27 42.3,33.5 C43.3,35 42.8,37.5 41.3,38 C40.8,42 38.8,46 35.8,48.5 C35.8,51 36.8,53 38.8,54 C46,57 54,59 60,64 Z" fill="#3b66ee" stroke="#d9e2fa" stroke-width="1.6"/>

<rect x="0" y="20" width="82" height="3" fill="#3b66ee"/>
</svg><svg style="left:1180px;top:565px;" width="82" height="67" viewBox="0 0 82 67">
<path d="M1,4.5 Q1,1 4.5,1 H28 Q31,1 33,3.5 L37,8.5 H77.5 Q81,8.5 81,12 V62.5 Q81,66 77.5,66 H4.5 Q1,66 1,62.5 Z" fill="#d9e2fa" stroke="#3b66ee" stroke-width="2"/>

<rect x="0" y="20" width="82" height="3" fill="#3b66ee"/>
</svg><svg style="left:1180px;top:697px;" width="82" height="67" viewBox="0 0 82 67">
<path d="M1,4.5 Q1,1 4.5,1 H28 Q31,1 33,3.5 L37,8.5 H77.5 Q81,8.5 81,12 V62.5 Q81,66 77.5,66 H4.5 Q1,66 1,62.5 Z" fill="#d9e2fa" stroke="#3b66ee" stroke-width="2"/>

<rect x="0" y="20" width="82" height="3" fill="#3b66ee"/>
</svg><svg style="left:1180px;top:830px;" width="82" height="67" viewBox="0 0 82 67">
<path d="M1,4.5 Q1,1 4.5,1 H28 Q31,1 33,3.5 L37,8.5 H77.5 Q81,8.5 81,12 V62.5 Q81,66 77.5,66 H4.5 Q1,66 1,62.5 Z" fill="#d9e2fa" stroke="#3b66ee" stroke-width="2"/>

<rect x="0" y="20" width="82" height="3" fill="#3b66ee"/>
</svg><svg style="left:1180px;top:962px;" width="82" height="67" viewBox="0 0 82 67">
<path d="M1,4.5 Q1,1 4.5,1 H28 Q31,1 33,3.5 L37,8.5 H77.5 Q81,8.5 81,12 V62.5 Q81,66 77.5,66 H4.5 Q1,66 1,62.5 Z" fill="#d9e2fa" stroke="#3b66ee" stroke-width="2"/>

<rect x="0" y="20" width="82" height="3" fill="#3b66ee"/>
</svg><svg style="left:1180px;top:1095px;" width="82" height="67" viewBox="0 0 82 67">
<path d="M1,4.5 Q1,1 4.5,1 H28 Q31,1 33,3.5 L37,8.5 H77.5 Q81,8.5 81,12 V62.5 Q81,66 77.5,66 H4.5 Q1,66 1,62.5 Z" fill="#d9e2fa" stroke="#3b66ee" stroke-width="2"/>

<rect x="0" y="20" width="82" height="3" fill="#3b66ee"/>
</svg><svg style="left:1177px;top:1218px;" width="82" height="82" viewBox="0 0 82 82">
<path d="M16,1.5 H62 L75,14 V78 Q75,80 73,80 H18 Q16,80 16,78 Z" fill="#f7f6f1" stroke="#bdbdbd" stroke-width="2.6" stroke-linejoin="round"/>
<path d="M62,1.5 V14 H75" fill="#ecebe6" stroke="#bdbdbd" stroke-width="2.6" stroke-linejoin="round"/>
<rect x="1" y="21.5" width="65.5" height="24.5" rx="3" fill="#3563db"/>
<text x="33.7" y="41" text-anchor="middle" font-family="Liberation Sans" font-weight="700" font-size="22.5" fill="#fff" letter-spacing="1">PNG</text>

</svg><svg style="left:1177px;top:1351px;" width="82" height="82" viewBox="0 0 82 82">
<path d="M16,1.5 H62 L75,14 V78 Q75,80 73,80 H18 Q16,80 16,78 Z" fill="#f7f6f1" stroke="#bdbdbd" stroke-width="2.6" stroke-linejoin="round"/>
<path d="M62,1.5 V14 H75" fill="#ecebe6" stroke="#bdbdbd" stroke-width="2.6" stroke-linejoin="round"/>
<rect x="1" y="21.5" width="65.5" height="24.5" rx="3" fill="#cf3439"/>
<text x="33.7" y="41" text-anchor="middle" font-family="Liberation Sans" font-weight="700" font-size="22.5" fill="#fff" letter-spacing="1">PDF</text>

</svg><svg style="left:1177px;top:1483px;" width="82" height="82" viewBox="0 0 82 82">
<path d="M16,1.5 H62 L75,14 V78 Q75,80 73,80 H18 Q16,80 16,78 Z" fill="#f7f6f1" stroke="#bdbdbd" stroke-width="2.6" stroke-linejoin="round"/>
<path d="M62,1.5 V14 H75" fill="#ecebe6" stroke="#bdbdbd" stroke-width="2.6" stroke-linejoin="round"/>
<rect x="1" y="21.5" width="65.5" height="24.5" rx="3" fill="#3563db"/>
<text x="33.7" y="41" text-anchor="middle" font-family="Liberation Sans" font-weight="700" font-size="22.5" fill="#fff" letter-spacing="1">DOC</text>

</svg><svg style="left:1177px;top:1616px;" width="82" height="82" viewBox="0 0 82 82">
<path d="M16,1.5 H62 L75,14 V78 Q75,80 73,80 H18 Q16,80 16,78 Z" fill="#f7f6f1" stroke="#bdbdbd" stroke-width="2.6" stroke-linejoin="round"/>
<path d="M62,1.5 V14 H75" fill="#ecebe6" stroke="#bdbdbd" stroke-width="2.6" stroke-linejoin="round"/>
<rect x="1" y="21.5" width="65.5" height="24.5" rx="3" fill="#3563db"/>
<text x="33.7" y="41" text-anchor="middle" font-family="Liberation Sans" font-weight="700" font-size="22.5" fill="#fff" letter-spacing="1">DOC</text>
<g transform="translate(68,64)"><circle r="14" fill="#e9eefc" stroke="#3b66ee" stroke-width="1.8"/>
<ellipse rx="6" ry="14" fill="none" stroke="#3b66ee" stroke-width="1.6"/><path d="M0,-14 V14 M-14,0 H14 M-12,-7 H12 M-12,7 H12" stroke="#3b66ee" stroke-width="1.6"/></g>
</svg><svg style="left:1180px;top:1757px;" width="82" height="67" viewBox="0 0 82 67">
<path d="M1,4.5 Q1,1 4.5,1 H28 Q31,1 33,3.5 L37,8.5 H77.5 Q81,8.5 81,12 V62.5 Q81,66 77.5,66 H4.5 Q1,66 1,62.5 Z" fill="#d9e2fa" stroke="#3b66ee" stroke-width="2"/>
<path d="M30,64 C34,60 38,57.5 42,55.5 C44,54.5 45,52.5 45,50 C42,47.5 40.5,43.5 40,39.5 C38.8,39 38.3,36.5 39.3,35 C38.5,28.5 41,23 47.75,23 C54.5,23 57,28.5 56.2,35 C57.2,36.5 56.7,39 55.5,39.5 C55,43.5 53.5,47.5 50.5,50 C50.5,52.5 51.5,54.5 53.5,55.5 C59,58 66,60 71,64 Z" fill="#3b66ee"/>
<path d="M9,64 C12,59 18,56 24,54 C26,53 27,51 27,48.5 C24,46 22,42 21.5,38 C20,37.5 19.5,35 20.5,33.5 C19.5,27 22,22.6 31.4,22.6 C40.8,22.6 43.3,27 42.3,33.5 C43.3,35 42.8,37.5 41.3,38 C40.8,42 38.8,46 35.8,48.5 C35.8,51 36.8,53 38.8,54 C46,57 54,59 60,64 Z" fill="#3b66ee" stroke="#d9e2fa" stroke-width="1.6"/>

<rect x="0" y="20" width="82" height="3" fill="#3b66ee"/>
</svg><svg style="left:2082px;top:187px;z-index:9" width="30" height="40" viewBox="0 0 30 40">
<path d="M2,2 V31 L9,24.5 L14,35 L19,33 L14,22.5 H23.5 Z" fill="#111" stroke="#fff" stroke-width="2" stroke-linejoin="round"/>
</svg>
</body></html>
